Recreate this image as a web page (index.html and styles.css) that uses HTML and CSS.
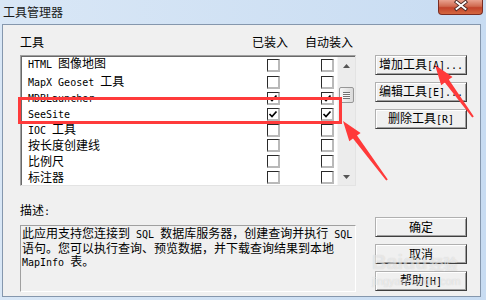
FILE: index.html
```html
<!DOCTYPE html>
<html lang="zh-CN">
<head>
    <meta charset="UTF-8">
    <title>工具管理器</title>
    <link rel="stylesheet" href="styles.css">
</head>
<body>
    <div class="window">
        <div class="titlebar">
            <span class="title">工具管理器</span>
            <div class="close-btn">
                <svg width="43" height="14" viewBox="0 0 43 14">
                    <path d="M17.5 2 L26.5 9 M26.5 2 L17.5 9" stroke="#4a2a26" stroke-width="3.6" stroke-linecap="square"/>
                    <path d="M17.5 2 L26.5 9 M26.5 2 L17.5 9" stroke="#fff" stroke-width="1.8" stroke-linecap="square"/>
                </svg>
            </div>
        </div>
        <div class="client">
            <div class="left">
                <div class="col-heads">
                    <span>工具</span>
                    <span>已装入</span>
                    <span>自动装入</span>
                </div>
                <div class="listbox">
                    <div class="rows">
                        <div class="row first"><span class="name"><span class="en">HTML </span>图像地图</span><span class="cb"></span><span class="cb"></span></div>
                        <div class="row"><span class="name"><span class="en">MapX Geoset </span>工具</span><span class="cb"></span><span class="cb"></span></div>
                        <div class="row"><span class="name"><span class="en">MDBLauncher</span></span><span class="cb checked"><svg viewBox="0 0 10 10"><path d="M1.5 5 L4 7.5 L8.5 2.5" stroke="#000" stroke-width="1.7" fill="none"/></svg></span><span class="cb checked"><svg viewBox="0 0 10 10"><path d="M1.5 5 L4 7.5 L8.5 2.5" stroke="#000" stroke-width="1.7" fill="none"/></svg></span></div>
                        <div class="row"><span class="name"><span class="en">SeeSite</span></span><span class="cb checked"><svg viewBox="0 0 10 10"><path d="M1.5 5 L4 7.5 L8.5 2.5" stroke="#000" stroke-width="1.7" fill="none"/></svg></span><span class="cb checked"><svg viewBox="0 0 10 10"><path d="M1.5 5 L4 7.5 L8.5 2.5" stroke="#000" stroke-width="1.7" fill="none"/></svg></span></div>
                        <div class="row"><span class="name"><span class="en">IOC </span>工具</span><span class="cb"></span><span class="cb"></span></div>
                        <div class="row"><span class="name">按长度创建线</span><span class="cb"></span><span class="cb"></span></div>
                        <div class="row"><span class="name">比例尺</span><span class="cb"></span><span class="cb"></span></div>
                        <div class="row"><span class="name">标注器</span><span class="cb"></span><span class="cb"></span></div>
                    </div>
                    <div class="scrollbar">
                        <div class="sb-btn"><svg width="7" height="4" viewBox="0 0 7 4"><path d="M0 4 L3.5 0 L7 4 Z" fill="#555"/></svg></div>
                        <div class="thumb"><div class="grip"></div></div>
                        <div class="sb-track"></div>
                        <div class="sb-btn"><svg width="7" height="4" viewBox="0 0 7 4"><path d="M0 0 L3.5 4 L7 0 Z" fill="#555"/></svg></div>
                    </div>
                </div>
                <div class="desc-label">描述<span class="en">:</span></div>
                <div class="desc">此应用支持您连接到<span class="en"> SQL </span>数据库服务器，创建查询并执行<span class="en"> SQL</span><br>语句。您可以执行查询、预览数据，并下载查询结果到本地<br><span class="en">MapInfo </span>表。</div>
            </div>
            <div class="buttons">
                <div class="group">
                    <button>增加工具<span class="en">[A]...</span></button>
                    <button>编辑工具<span class="en">[E]...</span></button>
                    <button>删除工具<span class="en">[R]</span></button>
                </div>
                <div class="group">
                    <button>确定</button>
                    <button>取消</button>
                    <button>帮助<span class="en">[H]</span></button>
                </div>
            </div>
        </div>
        <div class="highlight"></div>
        <svg class="arrows" width="486" height="300" viewBox="0 0 486 300">
            <polygon points="435,65 452.5,77 448.8,79.6 473.8,116.4 472.2,117.6 444.8,82.6 441.2,85.3" fill="#ff3a3a"/>
            <polygon points="343,121 360.6,132.9 357,135.6 387.8,179.4 386.2,180.6 353,138.5 349.3,141.2" fill="#ff3a3a"/>
        </svg>
        <div class="watermark">Baidu<span class="wm-cn">经验</span><div class="wm-url">jingyan.baidu.com</div></div>
    </div>
</body>
</html>
```

FILE: styles.css
```css
body { margin: 0; font-family: "Noto Sans CJK SC", sans-serif; font-size: 12px; color: #000; }
.window { position: relative; width: 486px; height: 300px; overflow: hidden; background: linear-gradient(90deg, #d9e7f6, #c8dcf2); }
.en { font-family: "DejaVu Sans Mono", monospace; font-size: 10px; }

.titlebar { height: 24px; display: flex; justify-content: space-between; align-items: flex-start; }
.title { padding: 5px 0 0 3px; line-height: 14px; color: #1b1b1b; }
.close-btn { width: 45px; height: 15px; margin-right: 3px; box-sizing: border-box; border: 1px solid #7b2d22; border-top: none; border-radius: 0 0 4px 4px; background: linear-gradient(#e9a28f, #d06a50 45%, #c2432b 55%, #d4673f); }
.close-btn svg { display: block; }

.client { margin-left: 2px; width: 479px; height: 273px; box-sizing: border-box; border: 1px solid #8597ad; background: #f0f0f0; display: flex; padding: 10px 0 0 17px; }

.left { width: 336px; display: flex; flex-direction: column; }
.col-heads { display: grid; grid-template-columns: 232px 53px auto; line-height: 14px; height: 14px; margin-bottom: 6px; }

.listbox { height: 131px; box-sizing: border-box; display: flex; background: #fff; border: 1px solid; border-color: #a0a0a0 #e3e3e3 #e3e3e3 #a0a0a0; box-shadow: inset 1px 1px #696969; padding: 1px 0 0 1px; overflow: hidden; }
.rows { flex: 1; }
.row { display: grid; grid-template-columns: 239px 54px 13px; align-items: center; height: 16px; padding-left: 6px; line-height: 16px; white-space: nowrap; }
.row.first .name { margin-top: -2px; }
.cb { width: 13px; height: 13px; box-sizing: border-box; border: 1px solid; border-width: 1px 2px 2px 1px; border-color: #2a2a2a #b9b9b9 #b9b9b9 #2a2a2a; background: #fff; }
.cb svg { display: block; width: 10px; height: 10px; }

.scrollbar { width: 17px; display: flex; flex-direction: column; background: #ececec; border-left: 1px solid #f6f6f6; }
.sb-btn { height: 17px; display: flex; align-items: center; justify-content: center; }
.thumb { height: 16px; margin: 13px 1px 0; box-sizing: border-box; border: 1px solid #979797; border-radius: 2px; background: linear-gradient(90deg, #f6f6f6, #dadada); display: flex; align-items: center; justify-content: center; }
.grip { width: 7px; height: 7px; background: repeating-linear-gradient(#727272 0 1px, #fafafa 1px 2px); }
.sb-track { flex: 1; }

.desc-label { margin-top: 17px; height: 14px; line-height: 14px; margin-bottom: 8px; }
.desc { height: 67px; box-sizing: border-box; border: 1px solid; border-color: #a0a0a0 #fff #fff #a0a0a0; padding: 0 0 0 1px; line-height: 13px; white-space: nowrap; }

.buttons { margin-left: 19px; width: 92px; display: flex; flex-direction: column; justify-content: space-between; padding: 20px 0 5px; }
.group { display: flex; flex-direction: column; gap: 7px; }
button { width: 92px; height: 20px; box-sizing: border-box; padding: 0; font-family: "Noto Sans CJK SC", sans-serif; font-size: 12px; color: #000; background: #f0f0f0; border: 1px solid; border-color: #b0b0b0 #3f3f3f #3f3f3f #b0b0b0; box-shadow: inset 1px 1px #fff, inset -1px -1px #a0a0a0; white-space: nowrap; line-height: 16px; }

.highlight { position: absolute; left: 18px; top: 97px; width: 324px; height: 27px; box-sizing: border-box; border: 3px solid #ff3b3b; }
.arrows { position: absolute; left: 0; top: 0; pointer-events: none; }

.watermark { position: absolute; left: 372px; top: 252px; font-family: "Liberation Sans", sans-serif; font-weight: bold; font-size: 20px; line-height: 20px; color: rgba(255, 255, 255, 0.5); text-shadow: 0 0 1px rgba(120, 120, 120, 0.3); }
.wm-cn { font-family: "Noto Sans CJK SC", sans-serif; font-size: 14px; margin-left: 2px; }
.wm-url { font-size: 11px; line-height: 12px; font-weight: normal; margin-top: 2px; }
```
